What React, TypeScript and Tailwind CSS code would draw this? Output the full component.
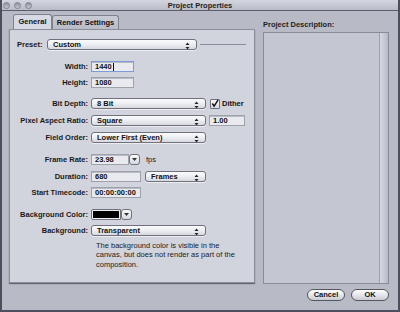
import React from "react";

function Arrows() {
  return (
    <svg width="5" height="8" viewBox="0 0 5 8" className="absolute right-[6px] top-[1.5px]">
      <path d="M0.5 3 L2.5 0.5 L4.5 3 Z" fill="#222" />
      <path d="M0.5 5 L2.5 7.5 L4.5 5 Z" fill="#222" />
    </svg>
  );
}

function Select({ w, text }: { w: string; text: string }) {
  return (
    <div
      className={`relative flex items-center h-[11px] rounded-[3px] border border-[#6f717c] bg-gradient-to-b from-[#fbfbfd] via-[#eceef2] to-[#d6d8df] pl-[5px] font-bold text-[#111] shadow-[0_1px_0_rgba(255,255,255,0.6)] ${w}`}
    >
      <span className="leading-none">{text}</span>
      <Arrows />
    </div>
  );
}

function Field({ w, text, focus }: { w: string; text: string; focus?: boolean }) {
  return (
    <div
      className={`flex items-center h-[11px] border ${
        focus ? "border-[#7f9bd6] shadow-[0_0_0_1px_#b4c6ee]" : "border-[#9fa1ab]"
      } bg-[#e9eaef] pl-[3px] font-bold text-[#111] shadow-[inset_0_1px_0_#b9bbc4] ${w}`}
    >
      <span className="leading-none">{text}</span>
      {focus && <span className="ml-[1px] w-[1px] h-[8px] bg-[#111]" />}
    </div>
  );
}

function DownBtn() {
  return (
    <div className="flex items-center justify-center w-[11px] h-[11px] rounded-[3px] border border-[#6f717c] bg-gradient-to-b from-[#fbfbfd] to-[#d6d8df]">
      <svg width="5" height="3" viewBox="0 0 5 3">
        <path d="M0 0 L5 0 L2.5 3 Z" fill="#333" />
      </svg>
    </div>
  );
}

function Label({ children }: { children: React.ReactNode }) {
  return <div className="w-[81px] pr-[3px] text-right font-bold text-[#1a1a1a] leading-none">{children}</div>;
}

export default function App() {
  return (
    <div className="w-[400px] h-[312px] overflow-hidden bg-[#4c4f5e] p-[2px] pt-0 font-['Liberation_Sans',Arial,sans-serif] text-[7.5px]">
      <div className="flex flex-col w-full h-full bg-[#b8bac6]">
        {/* title bar */}
        <div className="relative flex items-center h-[11px] border-b border-[#5b5e6c] bg-gradient-to-b from-[#d4d6df] to-[#b9bbc7]">
          <div className="flex items-center gap-[4px] pl-[1px]">
            <div className="w-[7px] h-[7px] rounded-full bg-gradient-to-b from-[#8d909c] to-[#c9cbd5] border border-[#80838f]" />
            <div className="w-[7px] h-[7px] rounded-full bg-gradient-to-b from-[#8d909c] to-[#c9cbd5] border border-[#80838f]" />
            <div className="w-[7px] h-[7px] rounded-full bg-gradient-to-b from-[#8d909c] to-[#c9cbd5] border border-[#80838f]" />
          </div>
          <div className="absolute left-0 right-0 top-0 h-[11px] flex items-center justify-center font-bold text-[#222] leading-none">
            Project Properties
          </div>
        </div>

        <div className="flex flex-1">
          {/* left column */}
          <div className="flex flex-col ml-[7px] w-[246px]">
            <div className="flex mt-[3px] pl-[4px] h-[15px] items-end">
              <div className="relative z-10 flex items-center justify-center w-[39px] h-[15px] rounded-t-[3px] border border-b-0 border-[#7f818d] bg-[#d8dae3] font-bold text-[#111] leading-none">
                General
              </div>
              <div className="flex items-center justify-center w-[67px] h-[14px] rounded-t-[3px] border border-b-0 border-[#7f818d] bg-gradient-to-b from-[#c9cbd5] to-[#b9bbc6] font-bold text-[#111] leading-none">
                Render Settings
              </div>
            </div>
            <div className="flex flex-col h-[254px] border border-[#8c8e9a] bg-[#d1d3dd] shadow-[0_1px_1px_rgba(0,0,0,0.45)]">
              {/* preset */}
              <div className="flex items-center h-[11px] mt-[9px]">
                <div className="w-[37px] pl-[7px] font-bold text-[#1a1a1a] leading-none">Preset:</div>
                <Select w="w-[150px]" text="Custom" />
                <div className="ml-[3px] w-[46px] h-[1px] bg-[#8a8c98]" />
              </div>
              <div className="flex items-center h-[11px] mt-[11px]">
                <Label>Width:</Label>
                <Field w="w-[43px]" text="1440" focus />
              </div>
              <div className="flex items-center h-[11px] mt-[5px]">
                <Label>Height:</Label>
                <Field w="w-[43px]" text="1080" />
              </div>
              <div className="flex items-center h-[11px] mt-[10px]">
                <Label>Bit Depth:</Label>
                <Select w="w-[115px]" text="8 Bit" />
                <div className="ml-[4px] flex items-center justify-center w-[10px] h-[10px] border border-[#6f717c] bg-gradient-to-b from-[#fbfbfd] to-[#d9dbe2] rounded-[1px]">
                  <svg width="9" height="9" viewBox="0 0 9 9">
                    <path d="M1.5 4.5 L3.5 7.5 L8 0.5" stroke="#111" strokeWidth="1.6" fill="none" />
                  </svg>
                </div>
                <span className="ml-[2px] font-bold text-[#111] leading-none">Dither</span>
              </div>
              <div className="flex items-center h-[11px] mt-[6px]">
                <Label>Pixel Aspect Ratio:</Label>
                <Select w="w-[115px]" text="Square" />
                <div className="ml-[3px]">
                  <Field w="w-[36px]" text="1.00" />
                </div>
              </div>
              <div className="flex items-center h-[11px] mt-[6px]">
                <Label>Field Order:</Label>
                <Select w="w-[115px]" text="Lower First (Even)" />
              </div>
              <div className="flex items-center h-[11px] mt-[11px]">
                <Label>Frame Rate:</Label>
                <Field w="w-[38px]" text="23.98" />
                <div className="ml-[0px]">
                  <DownBtn />
                </div>
                <span className="ml-[6px] text-[#222] leading-none">fps</span>
              </div>
              <div className="flex items-center h-[11px] mt-[6px]">
                <Label>Duration:</Label>
                <Field w="w-[50px]" text="680" />
                <div className="ml-[4px]">
                  <Select w="w-[61px]" text="Frames" />
                </div>
              </div>
              <div className="flex items-center h-[11px] mt-[5px]">
                <Label>Start Timecode:</Label>
                <Field w="w-[50px]" text="00:00:00:00" />
              </div>
              <div className="flex items-center h-[11px] mt-[11px]">
                <Label>Background Color:</Label>
                <div className="flex items-center w-[30px] h-[11px] border border-[#6f717c] bg-[#eceef2] p-[1px] rounded-l-[2px]">
                  <div className="w-full h-full bg-black" />
                </div>
                <DownBtn />
              </div>
              <div className="flex items-center h-[11px] mt-[5px]">
                <Label>Background:</Label>
                <Select w="w-[115px]" text="Transparent" />
              </div>
              <div className="ml-[86px] mt-[5px] w-[140px] text-[#222] leading-[9.3px]">
                The background color is visible in the canvas, but does not render as part of the composition.
              </div>
            </div>
          </div>

          {/* right column */}
          <div className="flex flex-col ml-[8px] w-[126px]">
            <div className="mt-[10px] h-[9px] font-bold text-[#222] leading-none">Project Description:</div>
            <div className="flex mt-[2px] h-[252px] border border-[#8a8c98] bg-[#c4c6d2]">
              <div className="flex-1" />
              <div className="w-[9px] border-l border-[#9fa1ad] bg-gradient-to-r from-[#d6d8e1] via-[#c8cad5] to-[#b5b7c3]" />
            </div>
            <div className="flex justify-end gap-[6px] mt-[5px] mr-[0px]">
              <div className="flex items-center justify-center w-[38px] h-[12px] rounded-full border border-[#55575f] bg-gradient-to-b from-[#ffffff] via-[#e6e7ec] to-[#c9cbd3] font-bold text-[#111] leading-none">
                Cancel
              </div>
              <div className="flex items-center justify-center w-[38px] h-[12px] rounded-full border border-[#55575f] bg-gradient-to-b from-[#ffffff] via-[#e6e7ec] to-[#c9cbd3] font-bold text-[#111] leading-none">
                OK
              </div>
            </div>
          </div>
        </div>
      </div>
    </div>
  );
}
